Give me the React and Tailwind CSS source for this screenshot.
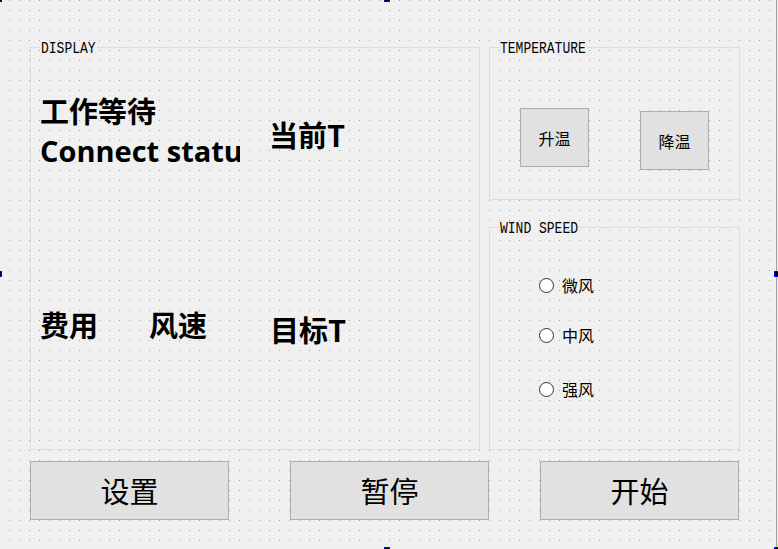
export default function App() {
  const cjk = "font-['Noto_Sans_CJK_SC','Noto_Sans',sans-serif]";
  const legend = "ml-[9px] px-[1px] text-[13px] leading-[15px] font-['Liberation_Mono',monospace]";
  return (
    <div className="relative w-[778px] h-[549px] overflow-hidden bg-[#f0f0f0] text-black">
      <div className={`relative w-[777px] h-[549px] border-r border-[#a0a0a0] ${cjk}`}>
        <svg className="absolute inset-0 pointer-events-none" width="777" height="549">
          <defs>
            <pattern id="dots" x="9" y="0" width="10" height="10" patternUnits="userSpaceOnUse">
              <rect width="1" height="1" fill="#a0a0a0" />
            </pattern>
          </defs>
          <rect width="777" height="549" fill="url(#dots)" />
        </svg>

        <div className="relative flex flex-col pl-[30px] pt-[40px]">
          <div className="flex gap-[9px]">
            {/* DISPLAY */}
            <fieldset className="w-[450px] h-[410px] border border-[#dcdcdc]">
              <legend className={legend}>
                <span className="inline-block translate-y-[1px] scale-y-125">DISPLAY</span>
              </legend>
              <div className="flex flex-col pl-[9px] pt-[41px]">
                <div className="flex h-[214px]">
                  <div className="flex w-[200px] flex-col">
                    <div className="text-[29px] font-bold leading-[29px]">工作等待</div>
                    <div className="mt-[9px] overflow-hidden whitespace-nowrap font-['Open_Sans',sans-serif] text-[29px] font-bold leading-[34px]">
                      Connect status
                    </div>
                  </div>
                  <div className="ml-[29px] mt-[24px] text-[29px] font-bold leading-[29px]">当前T</div>
                </div>
                <div className="flex">
                  <div className="w-[109px] text-[29px] font-bold leading-[29px]">费用</div>
                  <div className="w-[121px] text-[29px] font-bold leading-[29px]">风速</div>
                  <div className="mt-[5px] text-[29px] font-bold leading-[29px]">目标T</div>
                </div>
              </div>
            </fieldset>

            {/* Right column */}
            <div className="flex w-[251px] flex-col gap-[20px]">
              <fieldset className="h-[160px] border border-[#dcdcdc]">
                <legend className={legend}>
                  <span className="inline-block translate-y-[1px] scale-y-125">TEMPERATURE</span>
                </legend>
                <div className="flex items-start pl-[30px]">
                  <button className="mt-[53px] flex h-[59px] w-[69px] items-center justify-center border border-[#adadad] bg-[#e1e1e1] text-[16px] leading-none">
                    升温
                  </button>
                  <button className="ml-[51px] mt-[56px] flex h-[59px] w-[69px] items-center justify-center border border-[#adadad] bg-[#e1e1e1] text-[16px] leading-none">
                    降温
                  </button>
                </div>
              </fieldset>

              <fieldset className="h-[230px] border border-[#dcdcdc]">
                <legend className={legend}>
                  <span className="inline-block translate-y-[1px] scale-y-125">WIND SPEED</span>
                </legend>
                <div className="flex flex-col pl-[49px] pt-[40px]">
                  {[
                    ["微风", ""],
                    ["中风", "mt-[30px]"],
                    ["强风", "mt-[34px]"],
                  ].map(([t, m]) => (
                    <label key={t} className={`flex h-[20px] items-center ${m}`}>
                      <span className="h-[15px] w-[15px] rounded-full border border-[#333333] bg-white" />
                      <span className="ml-[8px] text-[16px] leading-none">{t}</span>
                    </label>
                  ))}
                </div>
              </fieldset>
            </div>
          </div>

          {/* Bottom buttons */}
          <div className="mt-[11px] flex">
            <button className="flex h-[59px] w-[199px] items-center justify-center border border-[#adadad] bg-[#e1e1e1] text-[29px] leading-none">
              设置
            </button>
            <button className="ml-[61px] flex h-[59px] w-[199px] items-center justify-center border border-[#adadad] bg-[#e1e1e1] text-[29px] leading-none">
              暂停
            </button>
            <button className="ml-[51px] flex h-[59px] w-[199px] items-center justify-center border border-[#adadad] bg-[#e1e1e1] text-[29px] leading-none">
              开始
            </button>
          </div>
        </div>
      </div>

      {/* selection handles */}
      <div className="absolute left-[-4px] top-[-4px] h-[6px] w-[6px] border border-[#0000ff] bg-black" />
      <div className="absolute left-[384px] top-[-4px] h-[6px] w-[6px] border border-[#0000ff] bg-black" />
      <div className="absolute left-[-4px] top-[271px] h-[6px] w-[6px] border border-[#0000ff] bg-black" />
      <div className="absolute left-[774px] top-[271px] h-[6px] w-[6px] border border-[#0000ff] bg-black" />
      <div className="absolute left-[384px] top-[547px] h-[6px] w-[6px] border border-[#0000ff] bg-black" />
      <div className="absolute left-[774px] top-[547px] h-[6px] w-[6px] border border-[#0000ff] bg-black" />
    </div>
  );
}
